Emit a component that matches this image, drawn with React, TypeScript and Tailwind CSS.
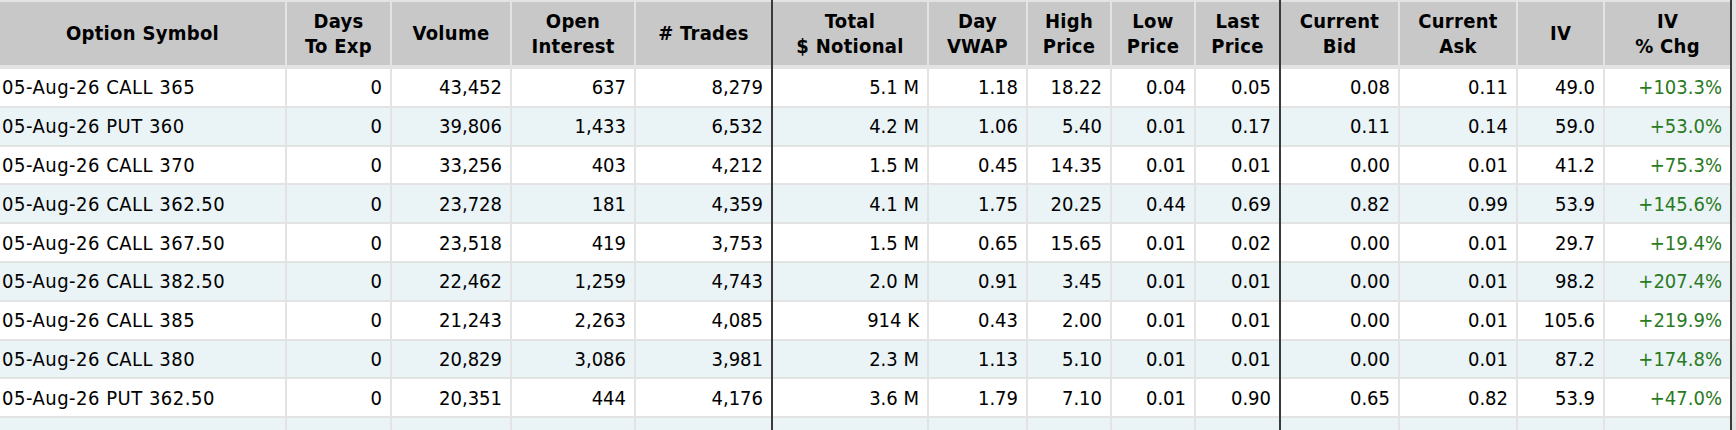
import React from 'react';

type Col = { w: string; label: string[]; dark?: boolean };

// column widths in px, "dark" marks a heavy divider after the column
const cols: Col[] = [
  { w: 'w-[285px]', label: ['Option Symbol'] },
  { w: 'w-[103px]', label: ['Days', 'To Exp'] },
  { w: 'w-[118px]', label: ['Volume'] },
  { w: 'w-[122px]', label: ['Open', 'Interest'] },
  { w: 'w-[135px]', label: ['# Trades'], dark: true },
  { w: 'w-[154px]', label: ['Total', '$ Notional'] },
  { w: 'w-[97px]', label: ['Day', 'VWAP'] },
  { w: 'w-[82px]', label: ['High', 'Price'] },
  { w: 'w-[82px]', label: ['Low', 'Price'] },
  { w: 'w-[83px]', label: ['Last', 'Price'], dark: true },
  { w: 'w-[117px]', label: ['Current', 'Bid'] },
  { w: 'w-[116px]', label: ['Current', 'Ask'] },
  { w: 'w-[85px]', label: ['IV'] },
  { w: 'w-[125px]', label: ['IV', '% Chg'], dark: true },
];

const rows: string[][] = [
  ['05-Aug-26 CALL 365', '0', '43,452', '637', '8,279', '5.1 M', '1.18', '18.22', '0.04', '0.05', '0.08', '0.11', '49.0', '+103.3%'],
  ['05-Aug-26 PUT 360', '0', '39,806', '1,433', '6,532', '4.2 M', '1.06', '5.40', '0.01', '0.17', '0.11', '0.14', '59.0', '+53.0%'],
  ['05-Aug-26 CALL 370', '0', '33,256', '403', '4,212', '1.5 M', '0.45', '14.35', '0.01', '0.01', '0.00', '0.01', '41.2', '+75.3%'],
  ['05-Aug-26 CALL 362.50', '0', '23,728', '181', '4,359', '4.1 M', '1.75', '20.25', '0.44', '0.69', '0.82', '0.99', '53.9', '+145.6%'],
  ['05-Aug-26 CALL 367.50', '0', '23,518', '419', '3,753', '1.5 M', '0.65', '15.65', '0.01', '0.02', '0.00', '0.01', '29.7', '+19.4%'],
  ['05-Aug-26 CALL 382.50', '0', '22,462', '1,259', '4,743', '2.0 M', '0.91', '3.45', '0.01', '0.01', '0.00', '0.01', '98.2', '+207.4%'],
  ['05-Aug-26 CALL 385', '0', '21,243', '2,263', '4,085', '914 K', '0.43', '2.00', '0.01', '0.01', '0.00', '0.01', '105.6', '+219.9%'],
  ['05-Aug-26 CALL 380', '0', '20,829', '3,086', '3,981', '2.3 M', '1.13', '5.10', '0.01', '0.01', '0.00', '0.01', '87.2', '+174.8%'],
  ['05-Aug-26 PUT 362.50', '0', '20,351', '444', '4,176', '3.6 M', '1.79', '7.10', '0.01', '0.90', '0.65', '0.82', '53.9', '+47.0%'],
  ['05-Aug-26 CALL 375', '0', '19,877', '1,102', '3,540', '1.2 M', '0.38', '9.80', '0.01', '0.01', '0.00', '0.01', '44.1', '+88.2%'],
];

const Divider = () => <div className="w-[2px] shrink-0 self-stretch bg-[#3a3a3a]" />;

const HeaderRow = () => (
  <div className="flex items-stretch">
    {cols.map((c, i) => (
      <React.Fragment key={i}>
        <div
          className={`${c.w} ${i === 0 || cols[i - 1].dark ? '' : 'ml-[2px]'} mt-[2px] h-[63px] shrink-0 bg-[#c8c8c8] flex flex-col items-center justify-center font-bold tracking-[0.3px] leading-[25px] text-black`}
        >
          {c.label.map((l) => (
            <span key={l}>{l}</span>
          ))}
        </div>
        {c.dark && <Divider />}
      </React.Fragment>
    ))}
  </div>
);

const DataRow = ({ r, idx }: { r: string[]; idx: number }) => (
  <div className="flex items-stretch">
    {r.map((v, i) => (
      <React.Fragment key={i}>
        <div
          className={`${cols[i].w} ${i === 0 || cols[i - 1].dark ? '' : 'ml-[2px]'} ${idx === 0 ? 'mt-[4px]' : 'mt-[2px]'} h-[36.8px] shrink-0 flex items-center whitespace-nowrap ${
            idx % 2 === 1 ? 'bg-[#eaf3f6]' : 'bg-white'
          } ${i === 0 ? 'pl-[2px] justify-start tracking-[0.5px]' : 'pr-[8px] justify-end'} ${i === 13 ? 'text-[#2a7a1e]' : 'text-black'}`}
        >
          {v}
        </div>
        {cols[i].dark && <Divider />}
      </React.Fragment>
    ))}
  </div>
);

export default function App() {
  return (
    <div className="w-[1736px] h-[430px] overflow-hidden bg-[#e3e3e3] font-['DejaVu_Sans_Condensed','DejaVu_Sans',sans-serif] text-[20px]">
      <HeaderRow />
      {rows.map((r, i) => (
        <DataRow key={i} r={r} idx={i} />
      ))}
    </div>
  );
}
